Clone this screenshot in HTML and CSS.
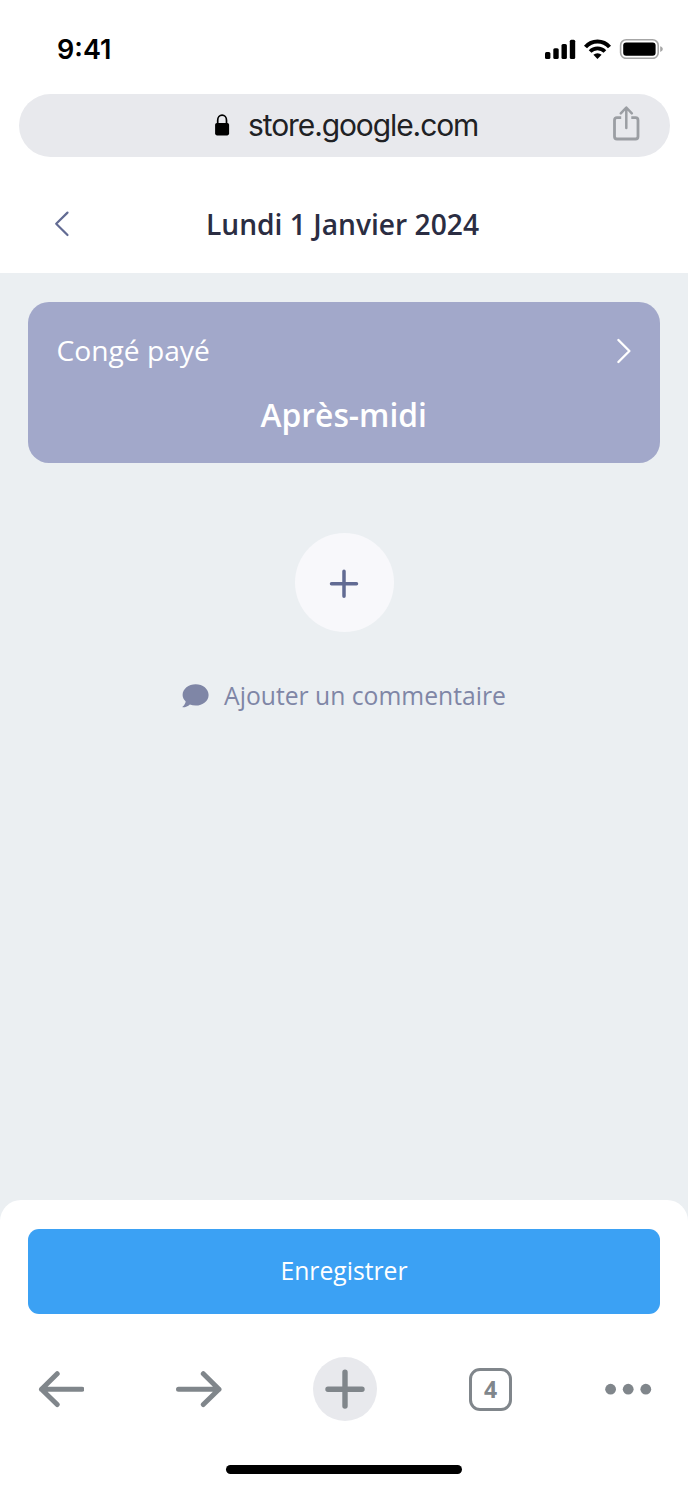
FILE: index.html
```html
<!DOCTYPE html>
<html lang="fr">
<head>
<meta charset="utf-8">
<title>Lundi 1 Janvier 2024</title>
<link rel="stylesheet" href="styles.css">
</head>
<body>
<div class="screen">
  <div class="status">
    <span class="time">9:41</span>
    <svg class="status-icons" width="118" height="20" viewBox="0 0 118 20">
      <rect x="0" y="13" width="5.4" height="7" rx="1.5"/>
      <rect x="8.3" y="9.3" width="5.4" height="10.7" rx="1.5"/>
      <rect x="16.5" y="5" width="5.4" height="15" rx="1.5"/>
      <rect x="24.8" y="0.8" width="5.4" height="19.2" rx="1.5"/>
      <path d="M40.5 8A15.8 15.8 0 0 1 64.5 8" fill="none" stroke="#000" stroke-width="4"/>
      <path d="M45.1 12.5A10.4 10.4 0 0 1 59.9 12.5" fill="none" stroke="#000" stroke-width="3.8"/>
      <path d="M48.4 15.8A6 6 0 0 1 56.6 15.8L52.5 20Z"/>
      <rect x="75.6" y="0.8" width="37.6" height="18.6" rx="5.6" fill="none" stroke="#a6a6a6" stroke-width="1.6"/>
      <rect x="78.2" y="3.4" width="32.4" height="13.4" rx="3"/>
      <path d="M115.2 7.2V12.9C117 12.2 117.8 11.2 117.8 10S117 7.9 115.2 7.2Z" fill="#a6a6a6"/>
    </svg>
  </div>
  <div class="address">
    <svg class="lock" width="15" height="22" viewBox="0 0 15 22">
      <rect x="0.1" y="9" width="14" height="12.4" rx="1.8"/>
      <path d="M2.7 10V6.2a4.4 5 0 0 1 8.8 0V10" fill="none" stroke="#000" stroke-width="1.7"/>
    </svg>
    <span class="url">store.google.com</span>
    <svg class="share" width="28" height="36" viewBox="0 0 28 36" fill="none" stroke="#9b9ea3" stroke-width="2.8" stroke-linecap="round" stroke-linejoin="round">
      <path d="M8.2 11.7H4Q1.5 11.7 1.5 14.2V30.5Q1.5 33 4 33H22.5Q25 33 25 30.5V14.2Q25 11.7 22.5 11.7H18.3" stroke-linecap="butt"/>
      <path d="M13.3 22V1.7M7.8 7.3L13.3 1.5L18.8 7.3" stroke-width="2.5"/>
    </svg>
  </div>
  <header class="header">
    <svg class="back" width="16" height="26" viewBox="0 0 16 26" fill="none" stroke="#626b93" stroke-width="2.2" stroke-linecap="round" stroke-linejoin="round"><path d="M13.5 1.6L2.2 12.8L13.5 24"/></svg>
    <h1 class="title">Lundi 1 Janvier 2024</h1>
  </header>
  <main class="content">
    <section class="card">
      <div class="card-head">
        <span class="card-label">Congé payé</span>
        <svg width="16" height="26" viewBox="0 0 16 26" fill="none" stroke="#fff" stroke-width="2.4" stroke-linecap="round" stroke-linejoin="round"><path d="M2.4 2L13.4 13L2.4 24"/></svg>
      </div>
      <div class="period">Après-midi</div>
    </section>
    <button class="add" aria-label="Ajouter">
      <svg width="30" height="32" viewBox="0 0 30 32" stroke="#626b93" stroke-width="3.5" stroke-linecap="round"><path d="M15 4.3V29.3M2.5 16.8H27.5"/></svg>
    </button>
    <div class="comment">
      <svg width="27" height="24" viewBox="0 0 27 24"><path fill="#7f86a6" d="M13.7 0.3C20.8 0.3 26.6 5 26.6 10.9S20.8 21.5 13.7 21.5C11.5 21.5 9.6 21.1 7.9 20.4C6 22.1 3.6 23.3 .8 23.3C.4 23.3 .4 22.9 .7 22.6C2.5 20.8 3.5 19.2 3.7 17.4C1.8 15.6 .6 13.4 .6 10.9C.6 5 6.6 .3 13.7 .3Z"/></svg>
      <span class="comment-text">Ajouter un commentaire</span>
    </div>
  </main>
  <footer class="footer">
    <button class="save"><span class="save-text">Enregistrer</span></button>
    <nav class="toolbar">
      <svg width="46" height="64" viewBox="0 0 46 64" fill="none" stroke="#80868b" stroke-width="5" stroke-linecap="round" stroke-linejoin="round"><path d="M44 32.2H3.5M19.2 16.7L3.5 32.2L19.2 47.5"/></svg>
      <svg width="46" height="64" viewBox="0 0 46 64" fill="none" stroke="#80868b" stroke-width="5" stroke-linecap="round" stroke-linejoin="round"><path d="M2.5 32.2H43M27.3 16.7L43 32.2L27.3 47.5"/></svg>
      <svg class="new-tab" width="64" height="64" viewBox="0 0 64 64"><circle cx="32" cy="32" r="32" fill="#e8e9ed"/><path d="M32 15.2V49M15 32.2H49" stroke="#80868b" stroke-width="5.4" stroke-linecap="round"/></svg>
      <span class="tabs">4</span>
      <svg width="47" height="64" viewBox="0 0 47 64" fill="#80868b"><circle cx="5.6" cy="32.2" r="5.4"/><circle cx="23.2" cy="32.2" r="5.4"/><circle cx="40.8" cy="32.2" r="5.4"/></svg>
    </nav>
    <div class="home"></div>
  </footer>
</div>
</body>
</html>
```
FILE: styles.css
```css
* { box-sizing: border-box; }
body { margin: 0; background: #fff; font-family: "Open Sans", sans-serif; }
button { border: 0; padding: 0; font: inherit; }
svg { display: block; flex: none; }
.screen { width: 688px; height: 1488px; display: flex; flex-direction: column; overflow: hidden; background: #fff; }
.status { height: 93.5px; padding: 33px 25px 0 57px; display: flex; justify-content: space-between; align-items: flex-start; }
.time { padding-top: 1px; font: 600 27px/32px Inter, sans-serif; color: #000; letter-spacing: 0; }
.status-icons { margin-top: 6px; }
.address { height: 63px; margin: 0 18px 0 19px; padding: 0 29.5px 0 196px; border-radius: 32px; background: #e8e9ed; display: flex; align-items: center; }
.url { margin-left: 18px; font: 400 30px/36px Inter, sans-serif; letter-spacing: -1.1px; color: #202124; white-space: nowrap; }
.share { margin-left: auto; margin-bottom: 3px; }
.header { height: 116.5px; padding: 19px 55px 0 54px; display: flex; align-items: center; flex: none; }
.title { flex: 1; margin: 0; padding-right: 18px; text-align: center; font-size: 28.2px; line-height: 38px; font-weight: 600; color: #2b2d42; white-space: nowrap; }
.content { flex: 1; background: #ebeff2; padding: 28.6px 28px 0; display: flex; flex-direction: column; align-items: center; }
.card { align-self: stretch; height: 161.8px; border-radius: 21px; background: #a2a8ca; color: #fff; padding: 28px 28px 0 28.5px; }
.card-head { display: flex; justify-content: space-between; align-items: center; height: 42px; }
.card-label { margin-top: -1px; font-size: 28.2px; line-height: 40px; }
.period { margin-top: 21.4px; padding-right: 1px; text-align: center; font-size: 31.8px; line-height: 44px; font-weight: 600; }
.add { width: 99px; height: 99px; margin-top: 70px; border-radius: 50%; background: #f8f8fb; display: flex; align-items: center; justify-content: center; }
.comment { margin-top: 46px; height: 36px; display: flex; align-items: center; gap: 15px; color: #7f86a6; font-size: 24.7px; line-height: 36px; white-space: nowrap; }
.footer { height: 288px; flex: none; position: relative; padding: 29px 28px 0; background: #fff; border-radius: 21px 21px 0 0; box-shadow: 0 -22px 0 22px #ebeff2; clip-path: inset(-22px 0 0 0); }
.save { width: 100%; height: 84.5px; border-radius: 11px; background: #3ba1f4; color: #fff; font-size: 24.7px; line-height: 84px; display: block; }
.toolbar { height: 64px; margin: 43.5px 8px 0 10px; display: flex; align-items: center; justify-content: space-between; }
.new-tab { margin: 0 1px 0 -1px; }
.tabs { width: 43px; height: 43px; margin: 0 1px 0 -1px; border: 3.5px solid #80868b; border-radius: 11px; color: #80868b; text-align: center; font-size: 23px; line-height: 37px; font-weight: 700; }
.home { width: 236px; height: 9px; margin: 44px auto 0; border-radius: 5px; background: #000; }
```
